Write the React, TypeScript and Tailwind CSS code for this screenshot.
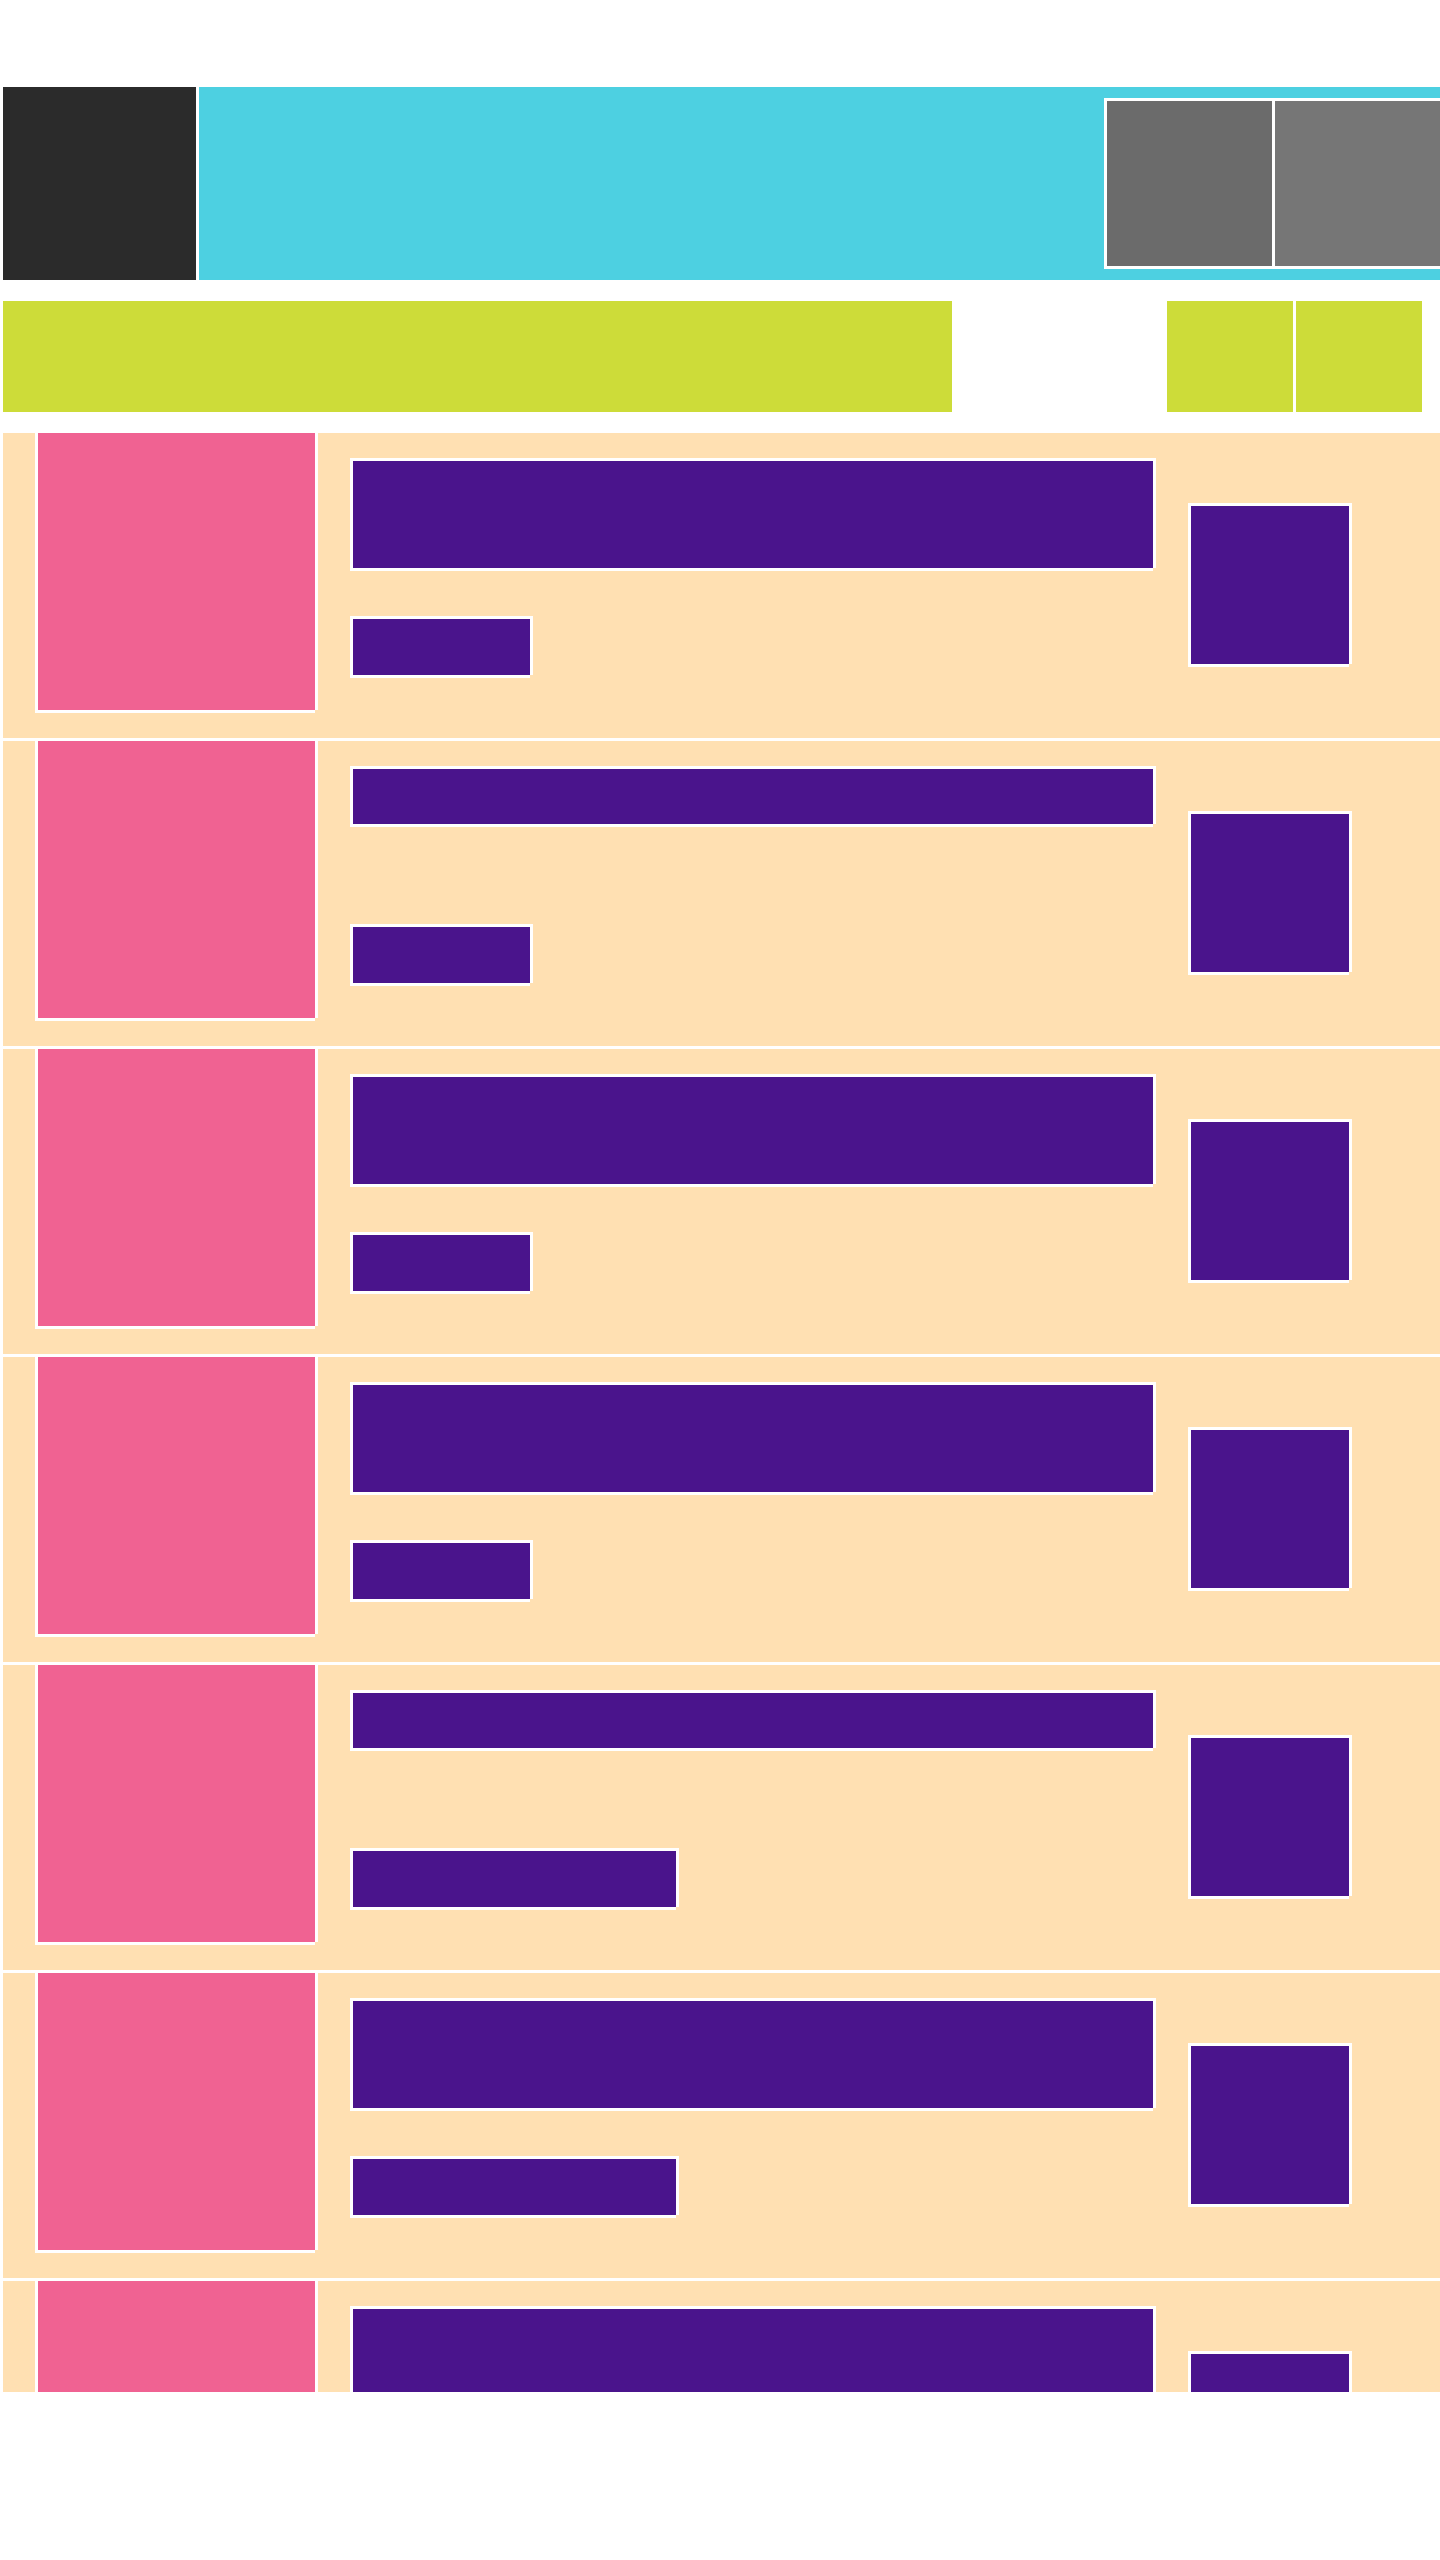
import React from 'react';

// white 3px frame around a block, missing its bottom-right corner
const frame =
  'shadow-[-3px_-3px_0_#fff,3px_-3px_0_#fff,-3px_3px_0_#fff,0_3px_0_#fff,3px_0_0_#fff]';

interface RowSpec {
  tallTitle: boolean;
  wideMeta: boolean;
}

const rows: RowSpec[] = [
  { tallTitle: true, wideMeta: false },
  { tallTitle: false, wideMeta: false },
  { tallTitle: true, wideMeta: false },
  { tallTitle: true, wideMeta: false },
  { tallTitle: false, wideMeta: true },
  { tallTitle: true, wideMeta: true },
  { tallTitle: true, wideMeta: false },
];

const ListRow: React.FC<RowSpec> = ({ tallTitle, wideMeta }) => (
  <div className="flex h-[305px] shrink-0 items-start bg-[#ffe0b2] pl-[35px]">
    {/* Thumbnail */}
    <div className={`h-[277px] w-[277px] shrink-0 bg-[#f06292] ${frame}`} />

    {/* Title + meta */}
    <div className="ml-[38px] mt-[28px] flex h-[214px] w-[800px] shrink-0 flex-col justify-between">
      <div className={`w-full bg-[#4a148c] ${tallTitle ? 'h-[107px]' : 'h-[55px]'} ${frame}`} />
      <div className={`h-[56px] bg-[#4a148c] ${wideMeta ? 'w-[323px]' : 'w-[177px]'} ${frame}`} />
    </div>

    {/* Action */}
    <div className={`ml-[38px] mt-[73px] h-[158px] w-[158px] shrink-0 bg-[#4a148c] ${frame}`} />
  </div>
);

export default function App() {
  return (
    <div className="min-h-[2560px] w-full overflow-hidden bg-white pl-[3px] pt-[87px]">
      {/* Header */}
      <div className="flex h-[193px] gap-[3px]">
        <div className="h-[193px] w-[193px] shrink-0 bg-[#2b2b2b]" />
        <div className="flex min-w-0 flex-1 items-center overflow-hidden bg-[#4dd0e1]">
          <div className="ml-[905px] flex shrink-0 gap-[3px] bg-white p-[3px]">
            <div className="h-[165px] w-[165px] bg-[#6b6b6b]" />
            <div className="h-[165px] w-[165px] bg-[#767676]" />
          </div>
        </div>
      </div>

      {/* Toolbar */}
      <div className="mt-[21px] flex h-[111px] pr-[18px]">
        <div className="h-full w-[949px] bg-[#cddc39]" />
        <div className="ml-auto flex gap-[3px]">
          <div className="h-full w-[126px] bg-[#cddc39]" />
          <div className="h-full w-[126px] bg-[#cddc39]" />
        </div>
      </div>

      {/* List */}
      <div className="mt-[21px] flex h-[1959px] flex-col gap-[3px] overflow-hidden">
        {rows.map((row, index) => (
          <ListRow key={index} {...row} />
        ))}
      </div>
    </div>
  );
}
